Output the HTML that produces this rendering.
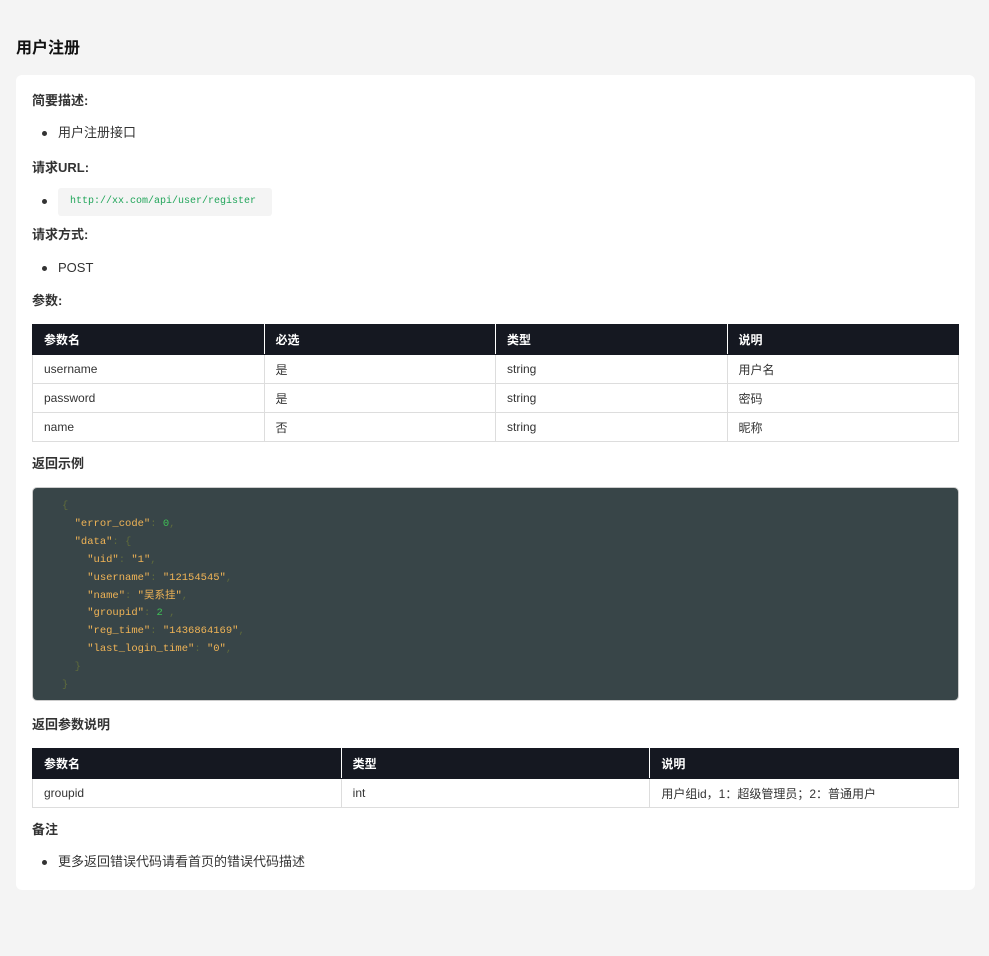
<!DOCTYPE html>
<html><head><meta charset="utf-8"><style>
*{margin:0;padding:0;box-sizing:border-box}
body{width:989px;height:956px;background:#f4f4f4;font-family:"Liberation Sans","Noto Sans CJK SC",sans-serif;color:#333;position:relative;overflow:hidden}
.a{position:absolute;white-space:nowrap}
h1{position:absolute;left:16px;top:39px;font-size:16px;font-weight:bold;color:#111;line-height:20px}
.card{position:absolute;left:16px;top:75px;width:959px;height:815px;background:#fff;border-radius:6px}
.h{font-size:13px;font-weight:bold;color:#333;line-height:16px}
.li{font-size:13px;line-height:16px;color:#333}
.dot{position:absolute;width:5px;height:5px;border-radius:50%;background:#333}
table{position:absolute;left:32px;width:927px;border-collapse:collapse;font-size:12px;table-layout:fixed}
th{background:#151821;color:#fff;text-align:left;font-weight:bold;height:30px;padding:0 11px;border:1px solid #ddd;border-color:#151821 #fff}
th:first-child{border-left-color:#151821}th:last-child{border-right-color:#151821}
td{height:29px;padding:0 11px;border:1px solid #ddd;color:#333}
.code{position:absolute;left:32px;top:487px;width:927px;height:214px;background:#384548;border-radius:5px;border:1px solid #ccc;font-family:"Liberation Mono","Noto Sans CJK SC",monospace;font-size:10.5px;line-height:17.9px;padding:10px 0 0 29px;white-space:pre;color:#5e6a3c}
.k{color:#f0b456}.s{color:#f0b456}.n{color:#3fbf55}.p{color:#5e6a3c}
</style></head><body>
<h1>用户注册</h1>
<div class="card"></div>
<div class="a h" style="left:32px;top:93px">简要描述:</div>
<div class="dot" style="left:42px;top:131px"></div>
<div class="a li" style="left:58px;top:125px">用户注册接口</div>
<div class="a h" style="left:32px;top:160px">请求URL:</div>
<div class="dot" style="left:42px;top:199px"></div>
<div class="a" style="left:58px;top:188px;width:214px;height:28px;background:#f4f4f4;border-radius:3px;font-family:'Liberation Mono',monospace;font-size:10px;color:#21a55a;line-height:28px;padding-left:12px">http://xx.com/api/user/register</div>
<div class="a h" style="left:32px;top:227px">请求方式:</div>
<div class="dot" style="left:42px;top:266px"></div>
<div class="a li" style="left:58px;top:260px">POST</div>
<div class="a h" style="left:32px;top:293px">参数:</div>
<table style="top:324px">
<tr><th>参数名</th><th>必选</th><th>类型</th><th>说明</th></tr>
<tr><td>username</td><td>是</td><td>string</td><td>用户名</td></tr>
<tr><td>password</td><td>是</td><td>string</td><td>密码</td></tr>
<tr><td>name</td><td>否</td><td>string</td><td>昵称</td></tr>
</table>
<div class="a h" style="left:32px;top:456px">返回示例</div>
<div class="code">{
  <span class="k">"error_code"</span>: <span class="n">0</span>,
  <span class="k">"data"</span>: {
    <span class="k">"uid"</span>: <span class="s">"1"</span>,
    <span class="k">"username"</span>: <span class="s">"12154545"</span>,
    <span class="k">"name"</span>: <span class="s">"吴系挂"</span>,
    <span class="k">"groupid"</span>: <span class="n">2</span> ,
    <span class="k">"reg_time"</span>: <span class="s">"1436864169"</span>,
    <span class="k">"last_login_time"</span>: <span class="s">"0"</span>,
  }
}</div>
<div class="a h" style="left:32px;top:717px">返回参数说明</div>
<table style="top:748px">
<tr><th>参数名</th><th>类型</th><th>说明</th></tr>
<tr><td>groupid</td><td>int</td><td>用户组id，1：超级管理员；2：普通用户</td></tr>
</table>
<div class="a h" style="left:32px;top:822px">备注</div>
<div class="dot" style="left:42px;top:860px"></div>
<div class="a li" style="left:58px;top:854px">更多返回错误代码请看首页的错误代码描述</div>
</body></html>
